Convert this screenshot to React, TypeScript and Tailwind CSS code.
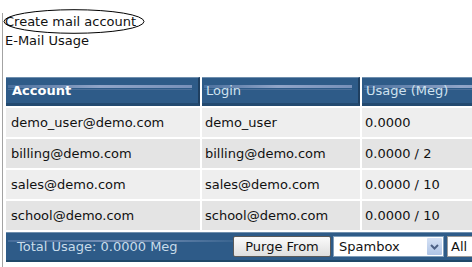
import React from "react";

const font = { fontFamily: '"DejaVu Sans", Verdana, sans-serif' };

const rows = [
  ["demo_user@demo.com", "demo_user", "0.0000"],
  ["billing@demo.com", "billing@demo.com", "0.0000 / 2"],
  ["sales@demo.com", "sales@demo.com", "0.0000 / 10"],
  ["school@demo.com", "school@demo.com", "0.0000 / 10"],
];

function HeadCell({ children, bold, pad }: { children: React.ReactNode; bold?: boolean; pad: string }) {
  return (
    <div className="relative h-[29px] overflow-hidden bg-[#2e5b88] border-t border-t-[#6f8fae] border-b-[3px] border-b-[#234a70] border-r-2 border-r-[#1f3f60]">
      <div className="absolute left-[2px] right-[6px] top-[7px] h-[3px] bg-gradient-to-r from-[#4d72a0] via-[#9cadcf] to-[#7f96bf] opacity-90" />
      <div className="absolute left-[2px] right-[6px] top-[11px] h-[1px] bg-[#4a6e98]" />
      <div className={`relative flex h-full items-center ${pad} ${bold ? "font-bold text-white" : "text-[#cfe2ef]"} text-[13px]`}>
        {children}
      </div>
    </div>
  );
}

export default function App() {
  return (
    <div className="relative h-[267px] w-[472px] overflow-hidden bg-white text-[13px] text-[#111]" style={font}>
      <svg className="absolute left-[3px] top-[9px]" width="143" height="26" viewBox="0 0 143 26">
        <ellipse cx="71" cy="12.5" rx="70" ry="11.8" fill="none" stroke="#000" strokeWidth="1" />
      </svg>
      <div className="ml-[2px] mt-[13px] flex h-[254px] flex-col border-l border-l-[#a3a3a3]">
        <div className="-mt-[1px] pl-[2px] leading-[19px]">Create mail account</div>
        <div className="pl-[2px] leading-[19px]">E-Mail Usage</div>
        <div className="ml-[3px] mt-[27px] grid w-[560px] grid-cols-[194px_158px_1fr] gap-x-[2px] gap-y-[2px]">
          <HeadCell bold pad="pl-[6px]">Account</HeadCell>
          <HeadCell pad="pl-[4px]">Login</HeadCell>
          <HeadCell pad="pl-[4px]">Usage (Meg)</HeadCell>
          {rows.map((r, i) => (
            <React.Fragment key={i}>
              {r.map((c, j) => (
                <div
                  key={j}
                  className={`flex h-[29px] items-center ${j === 0 ? "pl-[5px]" : "pl-[3px]"} ${i % 2 === 0 ? "bg-[#eeeeee]" : "bg-[#e4e4e4]"}`}
                >
                  {c}
                </div>
              ))}
            </React.Fragment>
          ))}
          <div className="col-span-3 relative flex h-[30px] items-center overflow-hidden bg-[#2e5b88] border-t border-t-[#6f8fae] border-b-[2px] border-b-[#1f4868]">
            <div className="absolute left-[2px] w-[228px] top-[7px] h-[2px] bg-gradient-to-r from-[#4d72a0] via-[#8ea2c6] to-[#3a6590] opacity-80" />
            <div className="relative pl-[11px] text-[#c9dcea] w-[227px]">Total Usage: 0.0000 Meg</div>
            <div className="relative flex h-[21px] w-[98px] items-center justify-center rounded-[2px] border border-[#5a5a5a] bg-gradient-to-b from-[#fbfbfb] to-[#dedede] text-[#111]">
              Purge From
            </div>
            <div className="relative ml-[2px] flex h-[21px] w-[111px] items-center border border-[#7f9db9] bg-white pl-[5px]">
              <span className="flex-1">Spambox</span>
              <div className="mr-[1px] flex h-[17px] w-[15px] items-center justify-center rounded-[1px] bg-gradient-to-b from-[#d6e2f5] to-[#aec4e6]">
                <svg width="9" height="6" viewBox="0 0 9 6">
                  <path d="M1 1 L4.5 4.5 L8 1" fill="none" stroke="#4d6185" strokeWidth="2" />
                </svg>
              </div>
            </div>
            <div className="relative ml-[3px] flex h-[21px] w-[40px] items-center border border-[#9a9a9a] bg-white pl-[3px]">All</div>
          </div>
        </div>
      </div>
    </div>
  );
}
